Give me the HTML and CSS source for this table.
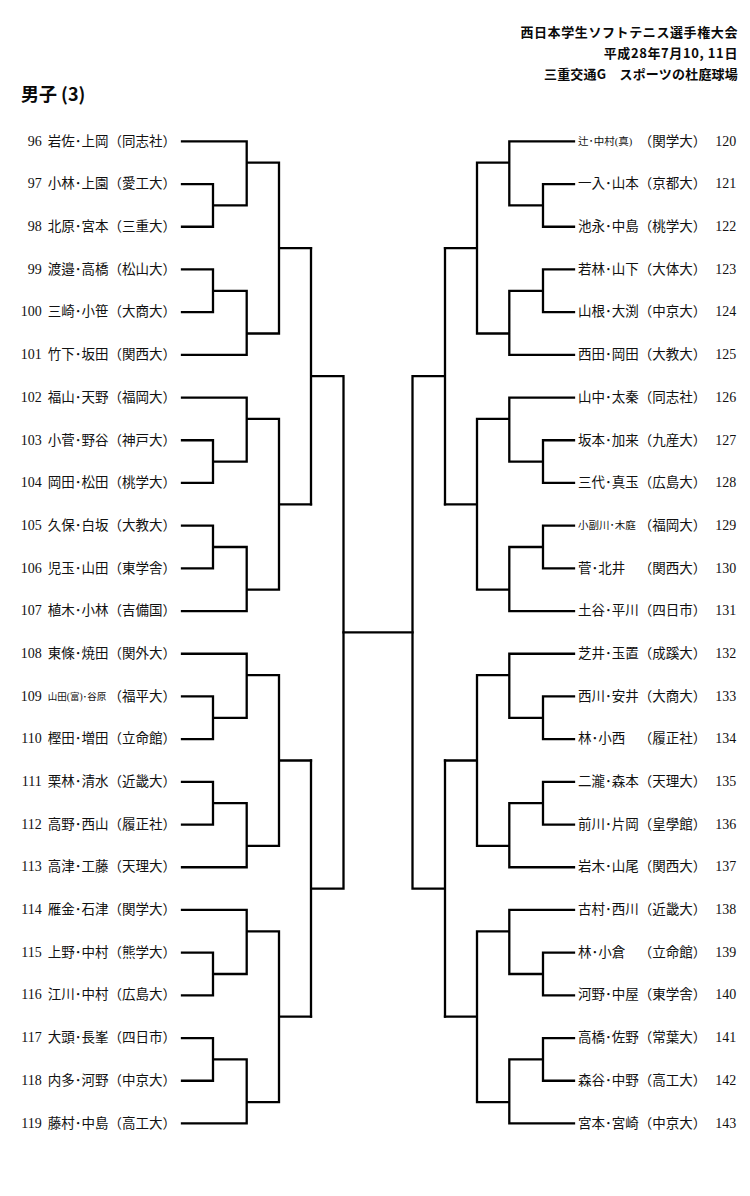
FILE: index.html
```html
<!DOCTYPE html>
<html lang="ja">
<head>
<meta charset="utf-8">
<title>男子 (3)</title>
<link rel="stylesheet" href="styles.css">
</head>
<body>
<header class="head">
  <div class="meta">
    <p>西日本学生ソフトテニス選手権大会</p>
    <p>平成28年7月10, 11日</p>
    <p class="venue">三重交通G　スポーツの杜庭球場</p>
  </div>
  <h1 class="title">男子 (3)</h1>
</header>
<main class="draw">
  <ol class="side left">
    <li><span class="no">96</span><span class="nm">岩佐･上岡</span><span class="sc">（同志社）</span></li>
    <li><span class="no">97</span><span class="nm">小林･上園</span><span class="sc">（愛工大）</span></li>
    <li><span class="no">98</span><span class="nm">北原･宮本</span><span class="sc">（三重大）</span></li>
    <li><span class="no">99</span><span class="nm">渡邉･高橋</span><span class="sc">（松山大）</span></li>
    <li><span class="no">100</span><span class="nm">三崎･小笹</span><span class="sc">（大商大）</span></li>
    <li><span class="no">101</span><span class="nm">竹下･坂田</span><span class="sc">（関西大）</span></li>
    <li><span class="no">102</span><span class="nm">福山･天野</span><span class="sc">（福岡大）</span></li>
    <li><span class="no">103</span><span class="nm">小菅･野谷</span><span class="sc">（神戸大）</span></li>
    <li><span class="no">104</span><span class="nm">岡田･松田</span><span class="sc">（桃学大）</span></li>
    <li><span class="no">105</span><span class="nm">久保･白坂</span><span class="sc">（大教大）</span></li>
    <li><span class="no">106</span><span class="nm">児玉･山田</span><span class="sc">（東学舎）</span></li>
    <li><span class="no">107</span><span class="nm">植木･小林</span><span class="sc">（吉備国）</span></li>
    <li><span class="no">108</span><span class="nm">東條･焼田</span><span class="sc">（関外大）</span></li>
    <li><span class="no">109</span><span class="nm xs">山田(富)･谷原</span><span class="sc">（福平大）</span></li>
    <li><span class="no">110</span><span class="nm">樫田･増田</span><span class="sc">（立命館）</span></li>
    <li><span class="no">111</span><span class="nm">栗林･清水</span><span class="sc">（近畿大）</span></li>
    <li><span class="no">112</span><span class="nm">高野･西山</span><span class="sc">（履正社）</span></li>
    <li><span class="no">113</span><span class="nm">高津･工藤</span><span class="sc">（天理大）</span></li>
    <li><span class="no">114</span><span class="nm">雁金･石津</span><span class="sc">（関学大）</span></li>
    <li><span class="no">115</span><span class="nm">上野･中村</span><span class="sc">（熊学大）</span></li>
    <li><span class="no">116</span><span class="nm">江川･中村</span><span class="sc">（広島大）</span></li>
    <li><span class="no">117</span><span class="nm">大頭･長峯</span><span class="sc">（四日市）</span></li>
    <li><span class="no">118</span><span class="nm">内多･河野</span><span class="sc">（中京大）</span></li>
    <li><span class="no">119</span><span class="nm">藤村･中島</span><span class="sc">（高工大）</span></li>
  </ol>
  <svg class="bracket" width="400" height="1024.8" viewBox="0 0 400 1024.8" aria-hidden="true">
    <defs>
      <g id="blk">
        <path vector-effect="non-scaling-stroke" d="M6 0H70.7V1.5M6 1H37V2H6M37 1.5H70.7M70.7 .5H103M6 3H37V4H6M37 3.5H70.7V5H6M70.7 4.5H103M103 .5V4.5M103 2.5H135"/>
      </g>
      <g id="half">
        <use href="#blk"/>
        <use href="#blk" transform="translate(0 6)"/>
        <use href="#blk" transform="translate(0 12)"/>
        <use href="#blk" transform="translate(0 18)"/>
        <path vector-effect="non-scaling-stroke" d="M135 2.5V8.5M135 5.5H167.5M135 14.5V20.5M135 17.5H167.5M167.5 5.5V17.5"/>
      </g>
    </defs>
    <g class="lines" transform="translate(0 21.35) scale(1 42.7)">
      <use href="#half"/>
      <use href="#half" transform="translate(404 0) scale(-1 1)"/>
      <path vector-effect="non-scaling-stroke" d="M167.5 11.5H236.5"/>
    </g>
  </svg>
  <ol class="side right">
    <li><span class="nm sm">辻･中村(真)</span><span class="sc">（関学大）</span><span class="no">120</span></li>
    <li><span class="nm">一入･山本</span><span class="sc">（京都大）</span><span class="no">121</span></li>
    <li><span class="nm">池永･中島</span><span class="sc">（桃学大）</span><span class="no">122</span></li>
    <li><span class="nm">若林･山下</span><span class="sc">（大体大）</span><span class="no">123</span></li>
    <li><span class="nm">山根･大渕</span><span class="sc">（中京大）</span><span class="no">124</span></li>
    <li><span class="nm">西田･岡田</span><span class="sc">（大教大）</span><span class="no">125</span></li>
    <li><span class="nm">山中･太秦</span><span class="sc">（同志社）</span><span class="no">126</span></li>
    <li><span class="nm">坂本･加来</span><span class="sc">（九産大）</span><span class="no">127</span></li>
    <li><span class="nm">三代･真玉</span><span class="sc">（広島大）</span><span class="no">128</span></li>
    <li><span class="nm sm">小副川･木庭</span><span class="sc">（福岡大）</span><span class="no">129</span></li>
    <li><span class="nm">菅･北井　</span><span class="sc">（関西大）</span><span class="no">130</span></li>
    <li><span class="nm">土谷･平川</span><span class="sc">（四日市）</span><span class="no">131</span></li>
    <li><span class="nm">芝井･玉置</span><span class="sc">（成蹊大）</span><span class="no">132</span></li>
    <li><span class="nm">西川･安井</span><span class="sc">（大商大）</span><span class="no">133</span></li>
    <li><span class="nm">林･小西　</span><span class="sc">（履正社）</span><span class="no">134</span></li>
    <li><span class="nm">二瀧･森本</span><span class="sc">（天理大）</span><span class="no">135</span></li>
    <li><span class="nm">前川･片岡</span><span class="sc">（皇學館）</span><span class="no">136</span></li>
    <li><span class="nm">岩木･山尾</span><span class="sc">（関西大）</span><span class="no">137</span></li>
    <li><span class="nm">古村･西川</span><span class="sc">（近畿大）</span><span class="no">138</span></li>
    <li><span class="nm">林･小倉　</span><span class="sc">（立命館）</span><span class="no">139</span></li>
    <li><span class="nm">河野･中屋</span><span class="sc">（東学舎）</span><span class="no">140</span></li>
    <li><span class="nm">高橋･佐野</span><span class="sc">（常葉大）</span><span class="no">141</span></li>
    <li><span class="nm">森谷･中野</span><span class="sc">（高工大）</span><span class="no">142</span></li>
    <li><span class="nm">宮本･宮崎</span><span class="sc">（中京大）</span><span class="no">143</span></li>
  </ol>
</main>
</body>
</html>
```
FILE: styles.css
```css
* { box-sizing: border-box; }

body {
  margin: 0;
  width: 750px;
  background: #fff;
  color: #111;
  font-family: "Liberation Serif", "Noto Sans CJK JP", serif;
}

.meta {
  padding: 20.5px 12px 0 0;
  text-align: right;
  font-family: "Noto Sans CJK JP", sans-serif;
  font-weight: 700;
  font-size: 13px;
  letter-spacing: 0.6px;
  line-height: 21px;
  color: #0a0a0a;
}

.meta p { margin: 0; }

.meta .venue { letter-spacing: 0.2px; }

.title {
  margin: 0;
  padding-left: 21px;
  font-family: "Noto Sans CJK JP", sans-serif;
  font-weight: 700;
  font-size: 18px;
  line-height: 19px;
  color: #0a0a0a;
}

.draw {
  display: grid;
  grid-template-columns: 176px 400px 174px;
  padding-top: 17.85px;
}

.side {
  list-style: none;
  margin: 0;
  padding: 0;
}

.side li {
  height: 42.7px;
  display: flex;
  align-items: center;
  font-size: 13.5px;
  line-height: 16px;
  white-space: nowrap;
}

.no { font-size: 14px; }

.left .no {
  width: 42px;
  margin-right: 6px;
  text-align: right;
}

.nm { min-width: 60.75px; }

.sc { width: 67.5px; }

.right li { padding-left: 2px; }

.right .no { margin-left: 9px; }

.nm.sm { font-size: 10.5px; }
.nm.xs { font-size: 9.5px; }

.bracket { display: block; }

.lines {
  fill: none;
  stroke: #000;
  stroke-width: 2.3;
  stroke-linecap: square;
  stroke-linejoin: miter;
}

.bracket path { vector-effect: non-scaling-stroke; }
```
